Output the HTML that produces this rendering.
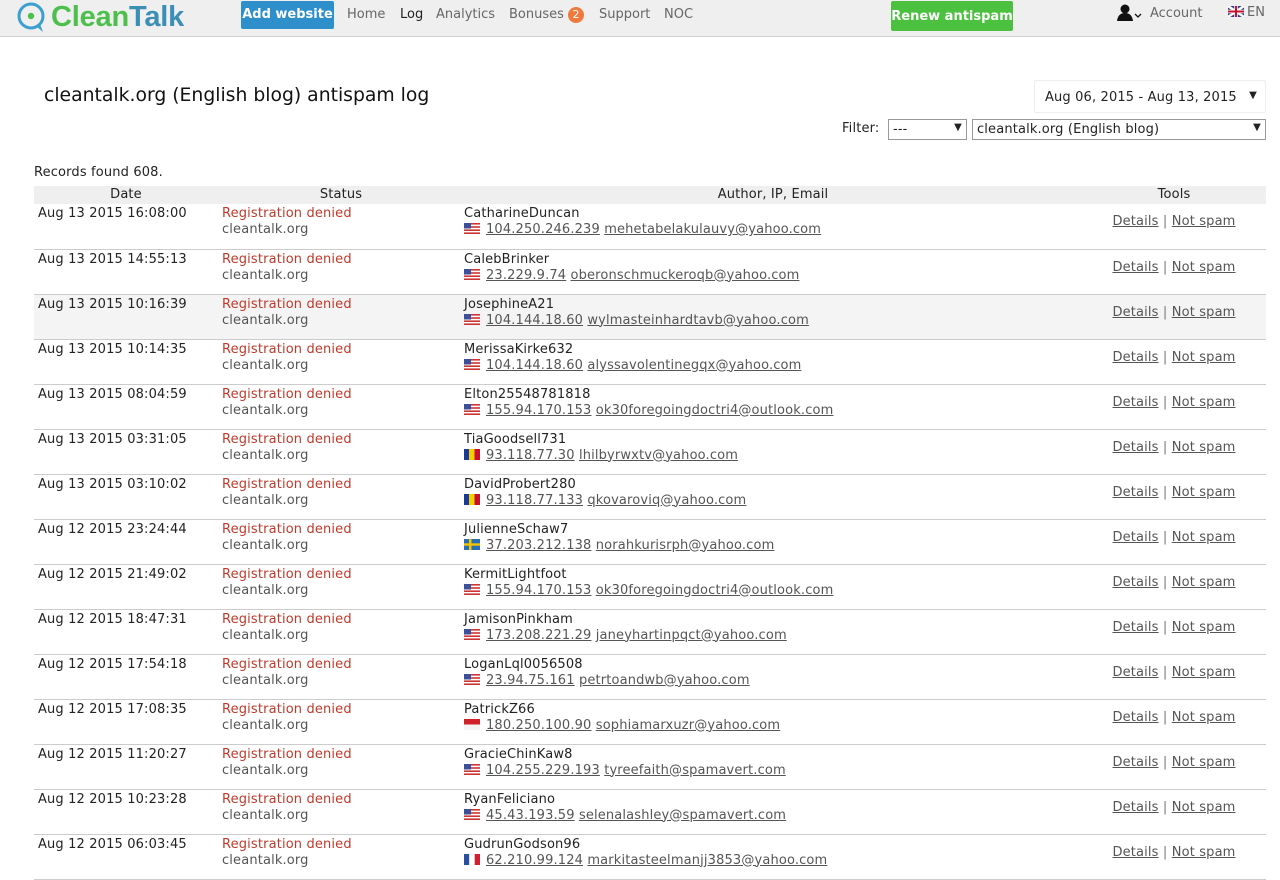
<!DOCTYPE html>
<html><head><meta charset="utf-8"><style>
*{box-sizing:border-box}
body{margin:0;background:#fff;font-family:"DejaVu Sans",Verdana,sans-serif;font-size:13px;color:#222;width:1280px;height:870px;overflow:hidden;letter-spacing:0.15px}
.top{height:37px;background:#efefef;border-bottom:1px solid #d0d0d0;position:relative;font-family:"DejaVu Sans",sans-serif;letter-spacing:0}
.top>*{position:absolute}
.logo{left:51px;top:1px;font-family:"Liberation Sans",sans-serif;font-weight:bold;font-size:29px;letter-spacing:-0.2px}
.nav{top:7px;font-size:13px;color:#666}
.btn{color:#fff;border-radius:2px;font-size:13px;font-weight:bold;text-align:center}
.title{position:absolute;left:44px;top:85px;font-size:18.8px;color:#111;letter-spacing:0}
.date{position:absolute;left:1034px;top:80px;width:232px;height:33px;border:1px solid #eee;border-radius:2px;padding:9px 0 0 10px;font-size:13px}
.sel{position:absolute;height:21px;border:1px solid #999;background:#fff;padding:2px 4px;font-size:13px}
.arr{position:absolute;right:4px;top:2px;font-size:10px}
table{position:absolute;left:34px;top:186px;width:1232px;border-collapse:collapse}
th{background:#efefef;font-weight:normal;height:18px;padding:0;font-size:13px;line-height:18px}
td{vertical-align:top;padding:2px 0 0 0;height:45px;border-bottom:1px solid #ccc;line-height:16px}
tr.h td{background:#f4f4f4}
.d{padding-left:4px}
.s{padding-left:4px}
.r{color:#c0392b}
.g{color:#555}
a{color:#555;text-decoration:underline}
.t{text-align:center;vertical-align:top;padding:10px 0 0 0}
.f{display:inline-block;width:16px;height:11px;vertical-align:-1px;margin-right:6px}
</style></head><body>
<div class="top">
 <svg style="left:16px;top:2px" width="30" height="32" viewBox="0 0 30 32"><circle cx="15" cy="14" r="12" fill="none" stroke="#3b9fd0" stroke-width="3"/><path d="M20 24 L27 30 L24 22" fill="#3b9fd0"/><circle cx="15" cy="14" r="3.2" fill="#4cbf4c"/></svg>
 <div class="logo"><span style="color:#4cbf4c">Clean</span><span style="color:#3b8fb5">Talk</span></div>
 <div class="btn" style="left:241px;top:1px;width:93px;height:28px;background:#2f8fcb;padding-top:6px">Add website</div>
 <div class="nav" style="left:347px">Home</div>
 <div class="nav" style="left:400px;color:#222">Log</div>
 <div class="nav" style="left:436px">Analytics</div>
 <div class="nav" style="left:509px">Bonuses <span style="display:inline-block;width:16px;height:16px;border-radius:8px;background:#f07a3c;color:#fff;font-size:11px;text-align:center;line-height:16px">2</span></div>
 <div class="nav" style="left:599px">Support</div>
 <div class="nav" style="left:664px">NOC</div>
 <div class="btn" style="left:891px;top:1px;width:122px;height:30px;background:#4cc13f;padding-top:8px;font-weight:600">Renew antispam</div>
 <svg style="left:1116px;top:4px" width="28" height="18" viewBox="0 0 28 18"><circle cx="9" cy="5" r="4.5" fill="#111"/><path d="M1 17 Q2 9 9 9 Q16 9 17 17Z" fill="#111"/><path d="M19 10 L22 13 L25 10" fill="none" stroke="#111" stroke-width="1.3"/></svg>
 <div class="nav" style="left:1150px;top:6px">Account</div>
 <svg style="left:1228px;top:6px" width="16" height="11" viewBox="0 0 16 11"><rect width="16" height="11" fill="#2a3f8f"/><path d="M0 0L16 11M16 0L0 11" stroke="#fff" stroke-width="2.5"/><path d="M8 0V11M0 5.5H16" stroke="#fff" stroke-width="3.5"/><path d="M8 0V11M0 5.5H16" stroke="#c8102e" stroke-width="2"/></svg>
 <div class="nav" style="left:1247px;top:5px">EN</div>
</div>
<div class="title">cleantalk.org (English blog) antispam log</div>
<div class="date">Aug 06, 2015 - Aug 13, 2015<span style="position:absolute;right:8px;top:9px;font-size:10px">▼</span></div>
<div style="position:absolute;left:842px;top:121px">Filter:</div>
<div class="sel" style="left:888px;top:119px;width:79px">---<span class="arr">▼</span></div>
<div class="sel" style="left:972px;top:119px;width:294px">cleantalk.org (English blog)<span class="arr">▼</span></div>
<div style="position:absolute;left:34px;top:165px">Records found 608.</div>
<table>
<colgroup><col style="width:184px"><col style="width:246px"><col style="width:618px"><col style="width:184px"></colgroup>
<tr><th>Date</th><th>Status</th><th>Author, IP, Email</th><th>Tools</th></tr>
<tbody id="b"></tbody>
</table>
<script>
var us='<svg class="f" viewBox="0 0 16 11"><rect width="16" height="11" fill="#fff"/><g fill="#c33"><rect y="0" width="16" height="1.6"/><rect y="3.2" width="16" height="1.6"/><rect y="6.4" width="16" height="1.6"/><rect y="9.4" width="16" height="1.6"/></g><rect width="7" height="5.5" fill="#3c4f9a"/></svg>';
var ro='<svg class="f" viewBox="0 0 16 11"><rect width="6" height="11" fill="#1a3a9a"/><rect x="5" width="6" height="11" fill="#f5d000"/><rect x="10.5" width="5.5" height="11" fill="#c8102e"/></svg>';
var se='<svg class="f" viewBox="0 0 16 11"><rect width="16" height="11" fill="#2a6fb5"/><rect x="5" width="2.5" height="11" fill="#f5c400"/><rect y="4.3" width="16" height="2.4" fill="#f5c400"/></svg>';
var id='<svg class="f" viewBox="0 0 16 11"><rect width="16" height="5.5" fill="#d0202a"/><rect y="5.5" width="16" height="5.5" fill="#f4f4f4"/></svg>';
var fr='<svg class="f" viewBox="0 0 16 11"><rect width="5.3" height="11" fill="#2a4fa0"/><rect x="5.3" width="5.4" height="11" fill="#fff"/><rect x="10.7" width="5.3" height="11" fill="#d02030"/></svg>';
var d=[["Aug 13 2015 16:08:00","CatharineDuncan",us,"104.250.246.239","mehetabelakulauvy@yahoo.com"],
["Aug 13 2015 14:55:13","CalebBrinker",us,"23.229.9.74","oberonschmuckeroqb@yahoo.com"],
["Aug 13 2015 10:16:39","JosephineA21",us,"104.144.18.60","wylmasteinhardtavb@yahoo.com"],
["Aug 13 2015 10:14:35","MerissaKirke632",us,"104.144.18.60","alyssavolentinegqx@yahoo.com"],
["Aug 13 2015 08:04:59","Elton25548781818",us,"155.94.170.153","ok30foregoingdoctri4@outlook.com"],
["Aug 13 2015 03:31:05","TiaGoodsell731",ro,"93.118.77.30","lhilbyrwxtv@yahoo.com"],
["Aug 13 2015 03:10:02","DavidProbert280",ro,"93.118.77.133","qkovaroviq@yahoo.com"],
["Aug 12 2015 23:24:44","JulienneSchaw7",se,"37.203.212.138","norahkurisrph@yahoo.com"],
["Aug 12 2015 21:49:02","KermitLightfoot",us,"155.94.170.153","ok30foregoingdoctri4@outlook.com"],
["Aug 12 2015 18:47:31","JamisonPinkham",us,"173.208.221.29","janeyhartinpqct@yahoo.com"],
["Aug 12 2015 17:54:18","LoganLql0056508",us,"23.94.75.161","petrtoandwb@yahoo.com"],
["Aug 12 2015 17:08:35","PatrickZ66",id,"180.250.100.90","sophiamarxuzr@yahoo.com"],
["Aug 12 2015 11:20:27","GracieChinKaw8",us,"104.255.229.193","tyreefaith@spamavert.com"],
["Aug 12 2015 10:23:28","RyanFeliciano",us,"45.43.193.59","selenalashley@spamavert.com"],
["Aug 12 2015 06:03:45","GudrunGodson96",fr,"62.210.99.124","markitasteelmanjj3853@yahoo.com"]];
var h='';d.forEach(function(r,i){h+='<tr'+(i==2?' class="h"':'')+'><td class="d">'+r[0]+'</td><td class="s"><span class="r">Registration denied</span><br><span class="g">cleantalk.org</span></td><td>'+r[1]+'<br>'+r[2]+'<a>'+r[3]+'</a> <a>'+r[4]+'</a></td><td class="t"><a>Details</a> <span style="color:#777">|</span> <a>Not spam</a></td></tr>';});
document.getElementById('b').innerHTML=h;
</script>
</body></html>
